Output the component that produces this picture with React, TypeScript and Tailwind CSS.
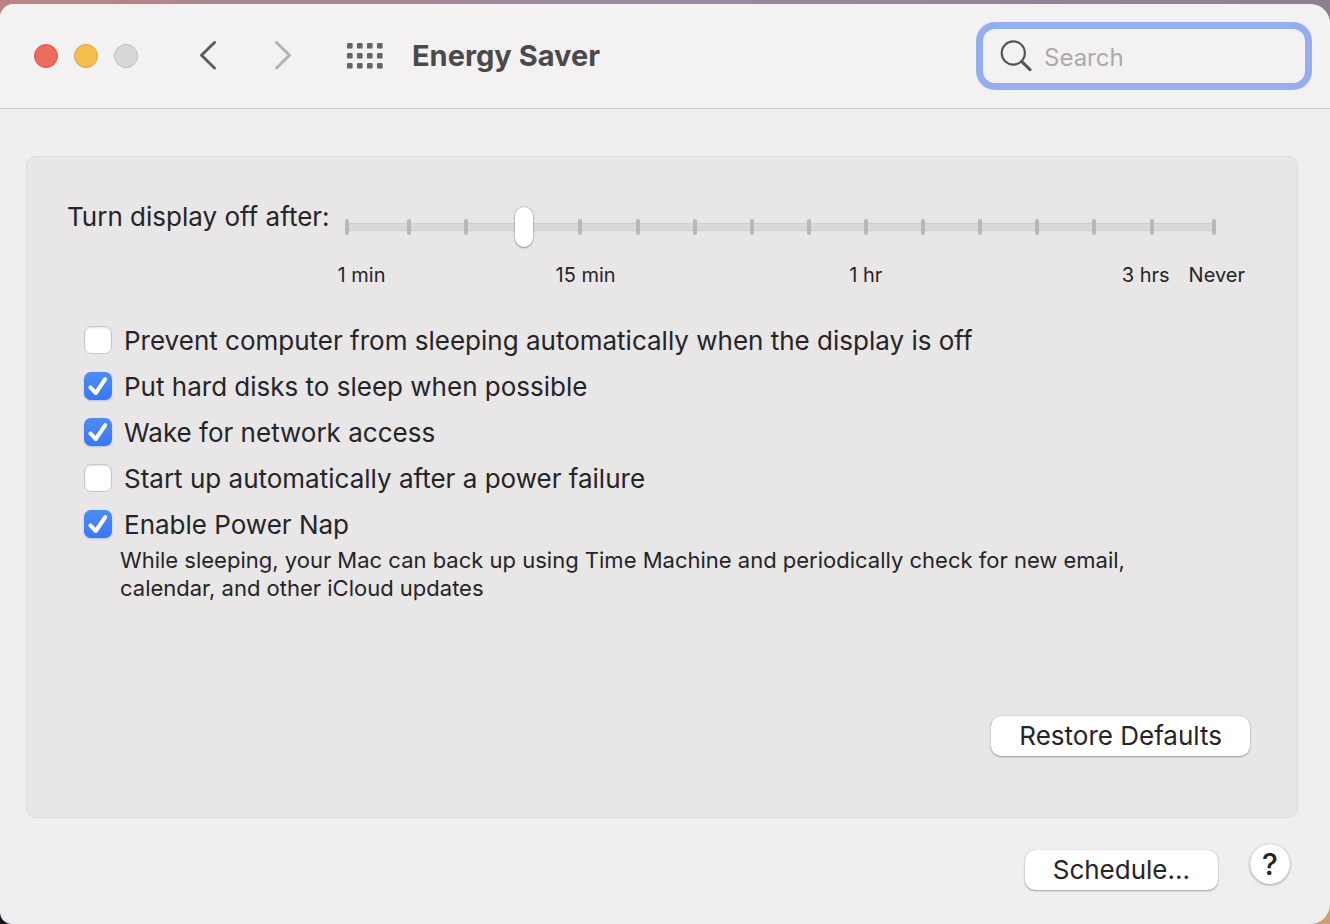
import { useState } from 'react';

const OPTIONS = [
    { id: 'prevent-sleep', label: 'Prevent computer from sleeping automatically when the display is off', on: false },
    { id: 'disk-sleep', label: 'Put hard disks to sleep when possible', on: true },
    { id: 'network-wake', label: 'Wake for network access', on: true },
    { id: 'auto-start', label: 'Start up automatically after a power failure', on: false },
    { id: 'power-nap', label: 'Enable Power Nap', on: true },
];

const BUTTON =
    'h-10 rounded-[10px] bg-white px-7 text-[26px] leading-8 shadow-[0_0_1px_rgba(0,0,0,0.3),0_1px_2px_rgba(0,0,0,0.3)]';

function Toolbar() {
    return (
        <header className="flex h-[105px] items-center border-b border-[#c8c6c8] bg-[#f4f1f3] pr-[25px] pl-[34px]">
            <div className="flex gap-4">
                <button aria-label="Close" className="size-6 rounded-full border border-[#d9554b] bg-[#ec6a5e]" />
                <button aria-label="Minimize" className="size-6 rounded-full border border-[#d9a13d] bg-[#f4bf4f]" />
                <button aria-label="Zoom" className="size-6 rounded-full border border-[#bfbdbe] bg-[#d9d8d8]" />
            </div>
            <button aria-label="Back" className="ml-[60px] text-[#5f5d5f]">
                <svg width="20" height="30" viewBox="0 0 20 30" fill="none" stroke="currentColor" strokeWidth="3" strokeLinecap="round" strokeLinejoin="round">
                    <path d="M16.5 1.5 3.5 14.3l13 12.7" />
                </svg>
            </button>
            <button aria-label="Forward" className="ml-[54px] text-[#b4b2b4]">
                <svg width="20" height="30" viewBox="0 0 20 30" fill="none" stroke="currentColor" strokeWidth="3" strokeLinecap="round" strokeLinejoin="round">
                    <path d="m4.5 1.5 13 12.8-13 12.7" />
                </svg>
            </button>
            <button aria-label="Show All" className="ml-[55px] text-[#656365]">
                <svg width="36" height="26" viewBox="0 0 36 26" fill="currentColor">
                    {[0, 10, 20].map((y) =>
                        [0, 10, 20, 30].map((x) => <rect key={`${x}-${y}`} x={x} y={y} width="5.6" height="5.6" rx="1.2" />)
                    )}
                </svg>
            </button>
            <h1 className="ml-[29px] text-[29px] leading-9 font-bold whitespace-nowrap text-[#4b494b]">Energy Saver</h1>
            <label className="ml-auto flex h-[54px] w-[322px] items-center rounded-xl pl-[17px] shadow-[0_0_0_7px_#95aeef]">
                <svg width="32" height="32" viewBox="0 0 32 32" fill="none" stroke="#565456" strokeLinecap="round" className="shrink-0">
                    <circle cx="13.3" cy="13" r="11.6" strokeWidth="2.1" />
                    <path d="m21.8 21.6 8.2 8" strokeWidth="3" />
                </svg>
                <input
                    type="text"
                    aria-label="Search"
                    placeholder="Search"
                    className="ml-3 w-full min-w-0 bg-transparent pt-1 text-2xl leading-8 outline-none placeholder:text-[#acaaac]"
                />
            </label>
        </header>
    );
}

function DisplaySlider() {
    const [value, setValue] = useState(3);

    return (
        <div className="mr-10 flex gap-3.5">
            <label htmlFor="display-off" className="text-[26px] leading-8 whitespace-nowrap">
                Turn display off after:
            </label>
            <div className="min-w-0 flex-1 pt-1 pr-10">
                <div className="grid h-11 items-center *:col-start-1 *:row-start-1">
                    <div className="mx-0.5 h-2 rounded-full border-y border-[#d0cece] bg-[#dad8d8]" />
                    <div className="mx-px flex items-center">
                        <span className="h-4 w-1 rounded-full bg-[#b9b7b8]" />
                        <div className="flex flex-1 px-8">
                            {Array.from({ length: 14 }, (_, i) => (
                                <span key={i} className="flex flex-1 justify-center">
                                    <span className="h-4 w-1 rounded-full bg-[#b9b7b8]" />
                                </span>
                            ))}
                        </div>
                        <span className="h-4 w-1 rounded-full bg-[#b9b7b8]" />
                    </div>
                    <input
                        id="display-off"
                        type="range"
                        min={0}
                        max={15}
                        value={value}
                        onChange={(e) => setValue(Number(e.target.value))}
                        className="h-11 w-full appearance-none bg-transparent [&::-webkit-slider-thumb]:h-10 [&::-webkit-slider-thumb]:w-[18px] [&::-webkit-slider-thumb]:appearance-none [&::-webkit-slider-thumb]:rounded-full [&::-webkit-slider-thumb]:bg-white [&::-webkit-slider-thumb]:shadow-[0_0_2px_rgba(0,0,0,0.3),0_1px_2px_rgba(0,0,0,0.3)]"
                    />
                </div>
                <div className="-mr-7 -ml-1.5 flex pt-3 text-xl leading-7 whitespace-nowrap">
                    <span>1 min</span>
                    <span className="grow-169" />
                    <span>15 min</span>
                    <span className="grow-232" />
                    <span>1 hr</span>
                    <span className="grow-238" />
                    <span>3 hrs</span>
                    <span className="ml-[19px]">Never</span>
                </div>
            </div>
        </div>
    );
}

function Option({ id, label, on }: { id: string; label: string; on: boolean }) {
    const [checked, setChecked] = useState(on);

    return (
        <div className="flex items-center gap-3">
            <span className="grid *:col-start-1 *:row-start-1">
                <input
                    id={id}
                    type="checkbox"
                    checked={checked}
                    onChange={() => setChecked(!checked)}
                    className="size-7 appearance-none rounded-[7px] border border-[#c9c7c8] bg-white shadow-[inset_0_1px_2px_rgba(0,0,0,0.12)] checked:border-0 checked:bg-linear-to-b checked:from-[#4d8cf7] checked:to-[#3b76f5] checked:shadow-[0_1px_2px_rgba(59,118,245,0.35)]"
                />
                {checked && (
                    <svg width="28" height="28" viewBox="0 0 28 28" fill="none" stroke="white" strokeWidth="4" strokeLinecap="round" strokeLinejoin="round" className="pointer-events-none">
                        <path d="m6.4 15.4 5.4 5.6L21.2 7.2" />
                    </svg>
                )}
            </span>
            <label htmlFor={id} className="pt-0.5 text-[26px] leading-8">
                {label}
            </label>
        </div>
    );
}

export default function App() {
    return (
        <div className="flex min-h-screen flex-col bg-[linear-gradient(to_right,#b98486,#988aa0,#8f7f92),linear-gradient(to_right,#17171f_50%,#c9a27c_50%)] bg-[length:100%_50%,100%_50%] bg-[position:top,bottom] bg-no-repeat pt-1 font-['Inter','Liberation_Sans',sans-serif] text-[#262426]">
            <div className="flex flex-1 flex-col overflow-hidden rounded-tl-[14px] rounded-tr-[20px] rounded-br-[20px] rounded-bl-xl bg-[#f0eeef]">
                <Toolbar />
                <main className="flex flex-1 flex-col pt-[47px] pr-8 pb-[34px] pl-[26px]">
                    <section className="flex flex-1 flex-col rounded-[10px] border border-[#dcdadb] bg-[#e8e6e7] pt-11 pb-[61px] pl-10">
                        <DisplaySlider />
                        <div className="mt-[34px] ml-[17px] flex flex-col gap-3">
                            {OPTIONS.map((o) => (
                                <Option key={o.id} {...o} />
                            ))}
                        </div>
                        <p className="mt-[5px] mr-32 ml-[53px] max-w-[1040px] text-[22px] leading-7">
                            While sleeping, your Mac can back up using Time Machine and periodically check for new email, calendar, and
                            other iCloud updates
                        </p>
                        <div className="mt-auto flex justify-end pt-8 pr-[47px]">
                            <button className={BUTTON}>Restore Defaults</button>
                        </div>
                    </section>
                    <footer className="flex items-start justify-end gap-8 pt-[26px] pr-2">
                        <button className={`mt-1.5 ${BUTTON}`}>Schedule...</button>
                        <button
                            aria-label="Help"
                            className="size-10 rounded-full bg-white text-[30px] leading-10 font-medium shadow-[0_0_1px_rgba(0,0,0,0.3),0_1px_3px_rgba(0,0,0,0.3)]"
                        >
                            ?
                        </button>
                    </footer>
                </main>
            </div>
        </div>
    );
}
